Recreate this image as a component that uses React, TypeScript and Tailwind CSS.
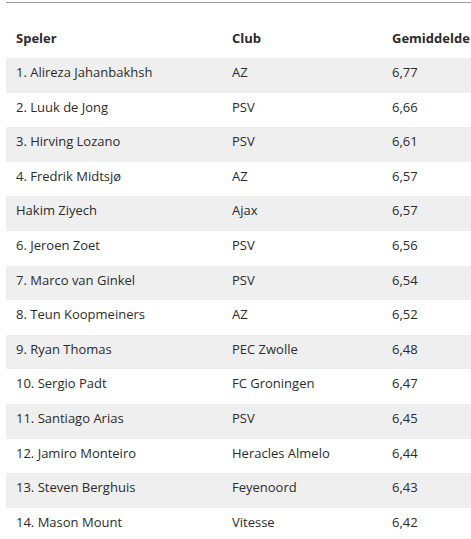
const rows: [string, string, string][] = [
  ["1. Alireza Jahanbakhsh", "AZ", "6,77"],
  ["2. Luuk de Jong", "PSV", "6,66"],
  ["3. Hirving Lozano", "PSV", "6,61"],
  ["4. Fredrik Midtsjø", "AZ", "6,57"],
  ["Hakim Ziyech", "Ajax", "6,57"],
  ["6. Jeroen Zoet", "PSV", "6,56"],
  ["7. Marco van Ginkel", "PSV", "6,54"],
  ["8. Teun Koopmeiners", "AZ", "6,52"],
  ["9. Ryan Thomas", "PEC Zwolle", "6,48"],
  ["10. Sergio Padt", "FC Groningen", "6,47"],
  ["11. Santiago Arias", "PSV", "6,45"],
  ["12. Jamiro Monteiro", "Heracles Almelo", "6,44"],
  ["13. Steven Berghuis", "Feyenoord", "6,43"],
  ["14. Mason Mount", "Vitesse", "6,42"],
]

export default function App() {
  return (
    <div className="w-[471px] h-[539px] overflow-hidden bg-white pl-[6px] pt-[2px] font-['Open_Sans',sans-serif] text-[13px] text-[#2b2b2b]">
      <div className="border-t border-[#9a9a9a]">
        <div className="flex items-center h-[55px] pt-[17px] font-bold">
          <div className="w-[226px] pl-[10px]">Speler</div>
          <div className="w-[160px]">Club</div>
          <div className="flex-1 whitespace-nowrap">Gemiddelde</div>
        </div>
        {rows.map(([name, club, avg], i) => (
          <div
            key={name}
            className={`flex items-center h-[34.6px] pb-[5px] ${i % 2 === 0 ? "bg-[#efefef]" : "bg-white"}`}
          >
            <div className="w-[226px] pl-[10px]">{name}</div>
            <div className="w-[160px]">{club}</div>
            <div className="flex-1">{avg}</div>
          </div>
        ))}
      </div>
    </div>
  )
}
